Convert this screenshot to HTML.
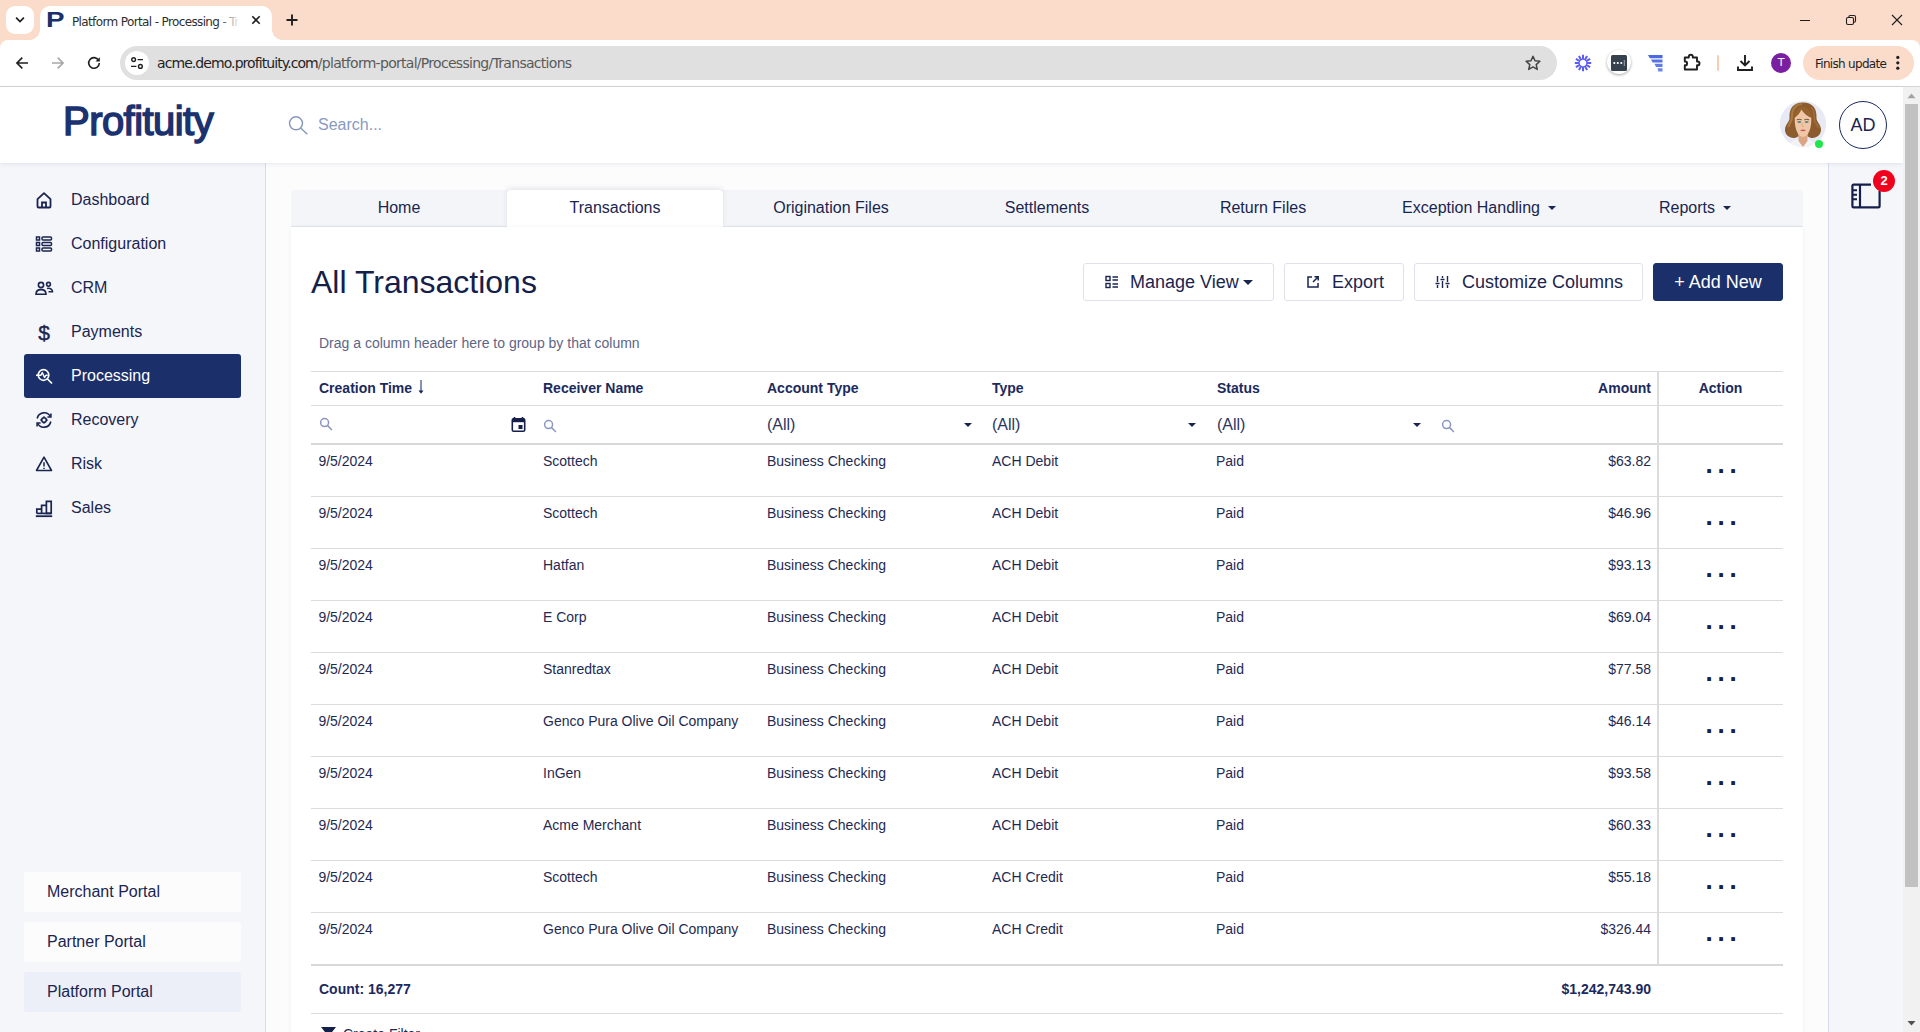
<!DOCTYPE html>
<html lang="en">
<head>
<meta charset="utf-8">
<title>Platform Portal - Processing - Transactions</title>
<style>
*{box-sizing:border-box;margin:0;padding:0}
html,body{width:1920px;height:1032px;overflow:hidden;background:#fcfcfc;font-family:"Liberation Sans",Arial,sans-serif;color:#1a2550}
.abs{position:absolute}
#root{position:relative;width:1920px;height:1032px;overflow:hidden}
/* ---------- browser chrome ---------- */
#tabstrip{left:0;top:0;width:1920px;height:50px;background:#fbdbc9}
#tabsearch{left:6px;top:6px;width:28px;height:28px;border-radius:9px;background:#fff}
#tab{left:40px;top:6px;width:232px;height:34px;background:#fff;border-radius:10px 10px 0 0}
#tab:before,#tab:after{content:"";position:absolute;bottom:0;width:10px;height:10px;background:radial-gradient(circle at 0 0,rgba(255,255,255,0) 9.5px,#fff 10px)}
#tab:before{left:-10px}
#tab:after{right:-10px;transform:scaleX(-1)}
#tabtitle{left:72px;top:13px;width:166px;height:18px;font-size:12px;line-height:18px;color:#2e2e2e;white-space:nowrap;overflow:hidden;font-family:"DejaVu Sans","Liberation Sans",sans-serif;letter-spacing:-0.63px}
#tabfade{left:218px;top:10px;width:22px;height:22px;background:linear-gradient(90deg,rgba(255,255,255,0),#fff)}
#toolbar{left:0;top:40px;width:1920px;height:46px;background:#fff;border-radius:8px 8px 0 0}
#tbline{left:0;top:86px;width:1920px;height:1px;background:#d5d5d5}
#omni{left:120px;top:46px;width:1437px;height:34px;border-radius:17px;background:#e0e0e0}
#omniicon{left:124.500px;top:50.700px;width:24.600px;height:24.600px;border-radius:13px;background:#fff}
#url{left:157px;top:53px;height:20px;font-size:14px;line-height:20px;color:#1f1f1f;white-space:nowrap;font-family:"DejaVu Sans","Liberation Sans",sans-serif;letter-spacing:-0.925px}
#url span{color:#5a5a5a;letter-spacing:-0.71px}
#finish{left:1803px;top:46px;width:111px;height:34px;border-radius:17px;background:#fbdbc9}
#finish span{position:absolute;left:12px;top:8px;font-size:12px;line-height:20px;color:#1f1f1f;font-family:"DejaVu Sans","Liberation Sans",sans-serif;letter-spacing:-0.7px;white-space:nowrap}
/* ---------- page ---------- */
#header{left:0;top:87px;width:1903px;height:76px;background:#fff;box-shadow:0 1px 4px rgba(40,50,90,.10)}
#logo{left:63px;top:96px;font-size:40px;line-height:50px;font-weight:normal;color:#1c3270;-webkit-text-stroke:1.5px #1c3270;letter-spacing:-0.55px;white-space:nowrap}
#search{left:318px;top:114px;font-size:16px;line-height:22px;color:#8a9ac0}
#avatar{left:1780px;top:101px;width:46px;height:46px;border-radius:23px;background:#e6e8f3;overflow:hidden}
#online{left:1815px;top:140px;width:8px;height:8px;border-radius:4px;background:#1fe64a}
#ad{left:1839px;top:101px;width:48px;height:48px;border-radius:24px;border:1px solid #1b2a5e;background:#fff;text-align:center;font-size:18px;line-height:47px;color:#1a2550}
#sidebar{left:0;top:163px;width:266px;height:869px;background:#f5f6fa;border-right:1px solid #d7dcf0}
.nav{left:24px;width:217px;height:44px;border-radius:3px;font-size:16px;line-height:44px;color:#1a2550;white-space:nowrap}
.nav span{position:absolute;left:47px;top:0}
.nav svg{position:absolute;left:10px;top:12px;width:20px;height:20px}
.nav.on{background:#1b306b;color:#fff}
.portal{left:24px;width:217px;height:40px;border-radius:3px;background:#fcfcfd;font-size:16px;line-height:39px;padding-left:23px;color:#1a2550;white-space:nowrap}
.portal.on{background:#edeff8}
#rpanel{left:1828px;top:163px;width:75px;height:869px;background:#f5f6fa;border-left:1px solid #d7dcf0}
#sbar{left:1903px;top:87px;width:17px;height:945px;background:#f1f1f1}
#sthumb{left:1905px;top:104px;width:13px;height:783px;background:#c1c1c1}

/* ---------- main ---------- */
#tabsbar{left:291px;top:190px;width:1512px;height:37px;background:#f3f5f9;border-bottom:1px solid #e3e6ef;border-radius:4px 4px 0 0}
.tab{top:190px;width:216px;height:36px;font-size:16px;line-height:35px;text-align:center;color:#1a2550;white-space:nowrap}
.tab.on{background:#fff;height:37px;border-radius:4px 4px 0 0;box-shadow:0 -2px 5px rgba(40,50,90,.10)}
.caret{display:inline-block;width:0;height:0;border-left:4px solid transparent;border-right:4px solid transparent;border-top:4px solid #1a2550;vertical-align:middle;margin-left:8px;position:relative;top:-1px}
#card{left:291px;top:227px;width:1512px;height:815px;background:#fff;box-shadow:0 0 4px rgba(0,0,0,.05)}
#title{left:311px;top:262px;font-size:32px;line-height:40px;color:#14204a;white-space:nowrap}
.btn{top:263px;height:38px;border:1px solid #dfe2ea;border-radius:3px;background:#fff;font-size:18px;line-height:36px;color:#1a2550;white-space:nowrap}
.btn span{position:absolute;top:0}
.btn svg{position:absolute}
.btn.pri{background:#1b306b;border-color:#1b306b;color:#fff;text-align:center}
#grouphint{left:319px;top:335px;font-size:14px;line-height:16px;color:#5d6585;white-space:nowrap}
.hl{left:311px;width:1472px;height:1px;background:#dcdcdc}
.th{top:380px;font-size:14px;line-height:16px;font-weight:bold;color:#1b2a5e;white-space:nowrap}
.flt{top:416px;font-size:16px;line-height:18px;color:#2a3560;white-space:nowrap}
.td{font-size:14px;line-height:16px;color:#1f2a52;white-space:nowrap}
.td.r,.th.r{text-align:right}
.dots{left:1705.6px;width:60px;text-align:left;font-size:26px;line-height:20px;font-weight:bold;color:#14204a;letter-spacing:4.77px;margin-top:4px}
.ddcar{width:0;height:0;border-left:4px solid transparent;border-right:4px solid transparent;border-top:4px solid #1a2550}
</style>
</head>
<body>
<div id="root">
<!-- browser chrome -->
<div id="tabstrip" class="abs"></div>
<div id="tabsearch" class="abs"></div>
<div id="tab" class="abs"></div>
<div id="tabtitle" class="abs">Platform Portal - Processing - Transactions</div>
<div id="tabfade" class="abs"></div>
<div id="toolbar" class="abs"></div>
<div id="tbline" class="abs"></div>
<div id="omni" class="abs"></div>
<div id="omniicon" class="abs"></div>
<div id="url" class="abs">acme.demo.profituity.com<span>/platform-portal/Processing/Transactions</span></div>
<div id="finish" class="abs"><span>Finish update</span></div>

<svg class="abs" style="left:12px;top:13px" width="16" height="14" viewBox="0 0 16 14"><path d="M4.100 4.600 8 8.500l3.900-3.900" fill="none" stroke="#1f1f1f" stroke-width="1.700"/></svg>
<div class="abs" style="left:46px;top:7.900px;font-size:22.400px;line-height:24px;font-weight:bold;color:#1b2f6b;font-family:'Liberation Sans',sans-serif;transform:scaleX(1.240);transform-origin:left">P</div>
<svg class="abs" style="left:248px;top:12px" width="16" height="16" viewBox="0 0 16 16"><path d="M4.300 4.300l7.400 7.400M11.700 4.300l-7.400 7.400" stroke="#1f1f1f" stroke-width="1.600"/></svg>
<svg class="abs" style="left:283px;top:11px" width="18" height="18" viewBox="0 0 18 18"><path d="M9 3.500v11M3.500 9h11" stroke="#1f1f1f" stroke-width="1.900"/></svg>
<svg class="abs" style="left:14px;top:54px" width="18" height="18" viewBox="0 0 18 18"><path d="M14 9H3.300M8.300 3.600 2.900 9l5.400 5.400" fill="none" stroke="#1f1f1f" stroke-width="1.600"/></svg>
<svg class="abs" style="left:49px;top:54px" width="18" height="18" viewBox="0 0 18 18"><path d="M3 9h10.700M8.700 3.600 14.100 9l-5.400 5.400" fill="none" stroke="#a8a8a8" stroke-width="1.600"/></svg>
<svg class="abs" style="left:84px;top:53px" width="20" height="20" viewBox="0 0 20 20"><path d="M14.600 7.300A5.300 5.300 0 1 0 15.300 10" fill="none" stroke="#1f1f1f" stroke-width="1.600"/><path d="M15.800 4.200v4.300h-4.300z" fill="#1f1f1f"/></svg>
<svg class="abs" style="left:129px;top:55px" width="16" height="16" viewBox="0 0 16 16"><g fill="none" stroke="#1f1f1f" stroke-width="1.400"><circle cx="4.600" cy="4.600" r="1.900"/><path d="M8.600 4.600h5.400M2 11.400h5.400"/><circle cx="11.400" cy="11.400" r="1.900"/></g></svg>
<svg class="abs" style="left:1524px;top:54px" width="18" height="18" viewBox="0 0 18 18"><path d="M9 2.300l2 4.500 4.900.5-3.700 3.300 1.100 4.800L9 12.900l-4.300 2.500 1.100-4.800L2.100 7.300 7 6.800z" fill="none" stroke="#444" stroke-width="1.500" stroke-linejoin="round"/></svg>
<svg class="abs" style="left:1574px;top:54px" width="18" height="18" viewBox="0 0 18 18"><g stroke="#5a5cf2" stroke-width="2"><path d="M12.20 9.00L17.20 9.00M11.77 10.60L16.10 13.10M10.60 11.77L13.10 16.10M9.00 12.20L9.00 17.20M7.40 11.77L4.90 16.10M6.23 10.60L1.90 13.10M5.80 9.00L0.80 9.00M6.23 7.40L1.90 4.90M7.40 6.23L4.90 1.90M9.00 5.80L9.00 0.80M10.60 6.23L13.10 1.90M11.77 7.40L16.10 4.90"/></g></svg>
<div class="abs" style="left:1607px;top:50px;width:24px;height:24px;border-radius:12px;background:#fff;box-shadow:0 1px 3px rgba(0,0,0,.35)"></div>
<svg class="abs" style="left:1611px;top:55px" width="16" height="16" viewBox="0 0 16 16"><rect width="16" height="16" rx="1.500" fill="#35414d"/><circle cx="3.300" cy="8" r="1.100" fill="#fff"/><circle cx="6.800" cy="8" r="1.100" fill="#fff"/><circle cx="10.300" cy="8" r="1.100" fill="#fff"/><path d="M13.300 5v6" stroke="#9aa3ad" stroke-width="1"/></svg>
<svg class="abs" style="left:1647px;top:54px" width="16" height="18" viewBox="0 0 16 18"><path d="M1 1h14.500v3.200H2.800z" fill="#4a68e0"/><path d="M4 5.400h11.500v3.200H5.600z" fill="#5572e4"/><path d="M7.500 9.800h8v3.200H9z" fill="#5f7ce8"/><path d="M10.500 14.200h5v3.200h-4.200z" fill="#6a86ec"/></svg>
<svg class="abs" style="left:1682px;top:52px" width="20" height="20" viewBox="0 0 20 20"><path d="M2.800 5.500H6.800V4.700a2 2 0 0 1 4 0v.8H15v4h.6a1.900 1.900 0 0 1 0 3.800H15v4.200H2.800v-4.200h.4a1.900 1.900 0 0 0 0-3.800h-.4z" fill="none" stroke="#1f1f1f" stroke-width="1.900" stroke-linejoin="round"/></svg>
<div class="abs" style="left:1717px;top:55px;width:2px;height:16px;border-radius:1px;background:#f8cdb8"></div>
<svg class="abs" style="left:1736px;top:53px" width="18" height="20" viewBox="0 0 18 20"><path d="M9 2v10M4.500 8 9 12.500 13.500 8" fill="none" stroke="#1f1f1f" stroke-width="1.900"/><path d="M2 13.500V17h14v-3.500" fill="none" stroke="#1f1f1f" stroke-width="1.900"/></svg>
<div class="abs" style="left:1771px;top:53px;width:20px;height:20px;border-radius:10px;background:#7b1fa2;color:#fff;font-size:11px;line-height:20px;text-align:center;font-family:'DejaVu Sans',sans-serif">T</div>
<svg class="abs" style="left:1895px;top:54px" width="6" height="18" viewBox="0 0 6 18"><circle cx="2.800" cy="3.400" r="1.600" fill="#1f1f1f"/><circle cx="2.800" cy="8.800" r="1.600" fill="#1f1f1f"/><circle cx="2.800" cy="14.200" r="1.600" fill="#1f1f1f"/></svg>
<svg class="abs" style="left:1799px;top:14px" width="12" height="12" viewBox="0 0 12 12"><path d="M1 6.500h10" stroke="#1f1f1f" stroke-width="1"/></svg>
<svg class="abs" style="left:1845px;top:14px" width="12" height="12" viewBox="0 0 12 12"><g fill="none" stroke="#1f1f1f" stroke-width="1.100"><rect x="1.500" y="3.500" width="7" height="7" rx="1.500"/><path d="M3.800 3.300V3A1.500 1.500 0 0 1 5.300 1.500H9A1.500 1.500 0 0 1 10.500 3v3.700a1.500 1.500 0 0 1-1.500 1.500h-.3"/></g></svg>
<svg class="abs" style="left:1891px;top:14px" width="12" height="12" viewBox="0 0 12 12"><path d="M1 1l10 10M11 1 1 11" stroke="#1f1f1f" stroke-width="1.100"/></svg>

<!-- page -->
<div id="sidebar" class="abs"></div>
<div id="rpanel" class="abs"></div>
<div id="tabsbar" class="abs"></div>
<div class="tab abs" style="left:291px">Home</div>
<div class="tab abs on" style="left:507px">Transactions</div>
<div class="tab abs" style="left:723px">Origination Files</div>
<div class="tab abs" style="left:939px">Settlements</div>
<div class="tab abs" style="left:1155px">Return Files</div>
<div class="tab abs" style="left:1371px">Exception Handling<i class="caret"></i></div>
<div class="tab abs" style="left:1587px">Reports<i class="caret"></i></div>
<div id="card" class="abs"></div>
<div id="title" class="abs">All Transactions</div>
<div class="btn abs" style="left:1083px;width:191px"><svg style="left:20px;top:10px" width="16" height="16" viewBox="0 0 16 16"><g fill="none" stroke="#1a2550" stroke-width="1.4"><rect x="2" y="2.500" width="4" height="4"/><rect x="2" y="9.500" width="4" height="4"/><path d="M8.500 3h5.500M8.500 6h5.500M8.500 10h5.500M8.500 13h5.500"/></g></svg><span style="left:46px">Manage View</span><i class="ddcar abs" style="left:159px;top:16px;border-left-width:5px;border-right-width:5px;border-top-width:5px"></i></div>
<div class="btn abs" style="left:1284px;width:120px"><svg style="left:20px;top:10px" width="16" height="16" viewBox="0 0 16 16"><g fill="none" stroke="#1a2550" stroke-width="1.500"><path d="M7 3H3v10h10V9"/><path d="M9.500 2.800H13.200V6.500M13 3 8 8"/></g></svg><span style="left:47px">Export</span></div>
<div class="btn abs" style="left:1414px;width:229px"><svg style="left:19px;top:10px" width="17" height="16" viewBox="0 0 17 16"><g fill="none" stroke="#1a2550" stroke-width="1.400"><path d="M3.500 2v6M3.500 11v3M1.500 9.500h4M8.500 2v2M8.500 7v7M6.500 5.500h4M13.500 2v6M13.500 11v3M11.500 9.500h4"/></g></svg><span style="left:47px">Customize Columns</span></div>
<div class="btn pri abs" style="left:1653px;width:130px">+ Add New</div>
<div id="grouphint" class="abs">Drag a column header here to group by that column</div>
<div class="hl abs" style="top:371px"></div>
<div class="hl abs" style="top:405px"></div>
<div class="hl abs" style="top:443px;height:2px;background:#d8d8d8"></div>
<div class="th abs" style="left:319px">Creation Time</div>
<div class="th abs" style="left:543px">Receiver Name</div>
<div class="th abs" style="left:767px">Account Type</div>
<div class="th abs" style="left:992px">Type</div>
<div class="th abs" style="left:1217px">Status</div>
<div class="th r abs" style="left:1451px;width:200px">Amount</div>
<div class="th abs" style="left:1658px;width:125px;text-align:center">Action</div>
<svg class="abs" style="left:319px;top:417px" width="14" height="14" viewBox="0 0 13 13"><g fill="none" stroke="#8b97c2" stroke-width="1.400"><circle cx="5.200" cy="5.200" r="3.700"/><path d="M8 8l4 4"/></g></svg>
<svg class="abs" style="left:543px;top:419px" width="14" height="14" viewBox="0 0 13 13"><g fill="none" stroke="#8b97c2" stroke-width="1.400"><circle cx="5.200" cy="5.200" r="3.700"/><path d="M8 8l4 4"/></g></svg>
<svg class="abs" style="left:1441px;top:419px" width="14" height="14" viewBox="0 0 13 13"><g fill="none" stroke="#8b97c2" stroke-width="1.400"><circle cx="5.200" cy="5.200" r="3.700"/><path d="M8 8l4 4"/></g></svg>
<svg class="abs" style="left:511px;top:416px" width="15" height="17" viewBox="0 0 15 17"><path d="M3.500 1v2.500M11.500 1v2.500" stroke="#14204a" stroke-width="1.600"/><rect x="1.300" y="2.800" width="12.400" height="12.400" rx="1.300" fill="none" stroke="#14204a" stroke-width="1.600"/><rect x="1.300" y="2.800" width="12.400" height="3.400" fill="#14204a"/><rect x="7.500" y="9" width="4" height="4" fill="#14204a"/></svg>
<div class="flt abs" style="left:767px">(All)</div>
<div class="flt abs" style="left:992px">(All)</div>
<div class="flt abs" style="left:1217px">(All)</div>
<i class="ddcar abs" style="left:964px;top:423px"></i>
<i class="ddcar abs" style="left:1188px;top:423px"></i>
<i class="ddcar abs" style="left:1413px;top:423px"></i>
<div class="td abs" style="left:318.400px;top:453px">9/5/2024</div><div class="td abs" style="left:543px;top:453px">Scottech</div><div class="td abs" style="left:767px;top:453px">Business Checking</div><div class="td abs" style="left:992px;top:453px">ACH Debit</div><div class="td abs" style="left:1216px;top:453px">Paid</div><div class="td r abs" style="left:1451px;width:200px;top:453px">$63.82</div><div class="dots abs" style="top:450px">...</div>
<div class="hl abs" style="top:496px"></div>
<div class="td abs" style="left:318.400px;top:505px">9/5/2024</div><div class="td abs" style="left:543px;top:505px">Scottech</div><div class="td abs" style="left:767px;top:505px">Business Checking</div><div class="td abs" style="left:992px;top:505px">ACH Debit</div><div class="td abs" style="left:1216px;top:505px">Paid</div><div class="td r abs" style="left:1451px;width:200px;top:505px">$46.96</div><div class="dots abs" style="top:502px">...</div>
<div class="hl abs" style="top:548px"></div>
<div class="td abs" style="left:318.400px;top:557px">9/5/2024</div><div class="td abs" style="left:543px;top:557px">Hatfan</div><div class="td abs" style="left:767px;top:557px">Business Checking</div><div class="td abs" style="left:992px;top:557px">ACH Debit</div><div class="td abs" style="left:1216px;top:557px">Paid</div><div class="td r abs" style="left:1451px;width:200px;top:557px">$93.13</div><div class="dots abs" style="top:554px">...</div>
<div class="hl abs" style="top:600px"></div>
<div class="td abs" style="left:318.400px;top:609px">9/5/2024</div><div class="td abs" style="left:543px;top:609px">E Corp</div><div class="td abs" style="left:767px;top:609px">Business Checking</div><div class="td abs" style="left:992px;top:609px">ACH Debit</div><div class="td abs" style="left:1216px;top:609px">Paid</div><div class="td r abs" style="left:1451px;width:200px;top:609px">$69.04</div><div class="dots abs" style="top:606px">...</div>
<div class="hl abs" style="top:652px"></div>
<div class="td abs" style="left:318.400px;top:661px">9/5/2024</div><div class="td abs" style="left:543px;top:661px">Stanredtax</div><div class="td abs" style="left:767px;top:661px">Business Checking</div><div class="td abs" style="left:992px;top:661px">ACH Debit</div><div class="td abs" style="left:1216px;top:661px">Paid</div><div class="td r abs" style="left:1451px;width:200px;top:661px">$77.58</div><div class="dots abs" style="top:658px">...</div>
<div class="hl abs" style="top:704px"></div>
<div class="td abs" style="left:318.400px;top:713px">9/5/2024</div><div class="td abs" style="left:543px;top:713px">Genco Pura Olive Oil Company</div><div class="td abs" style="left:767px;top:713px">Business Checking</div><div class="td abs" style="left:992px;top:713px">ACH Debit</div><div class="td abs" style="left:1216px;top:713px">Paid</div><div class="td r abs" style="left:1451px;width:200px;top:713px">$46.14</div><div class="dots abs" style="top:710px">...</div>
<div class="hl abs" style="top:756px"></div>
<div class="td abs" style="left:318.400px;top:765px">9/5/2024</div><div class="td abs" style="left:543px;top:765px">InGen</div><div class="td abs" style="left:767px;top:765px">Business Checking</div><div class="td abs" style="left:992px;top:765px">ACH Debit</div><div class="td abs" style="left:1216px;top:765px">Paid</div><div class="td r abs" style="left:1451px;width:200px;top:765px">$93.58</div><div class="dots abs" style="top:762px">...</div>
<div class="hl abs" style="top:808px"></div>
<div class="td abs" style="left:318.400px;top:817px">9/5/2024</div><div class="td abs" style="left:543px;top:817px">Acme Merchant</div><div class="td abs" style="left:767px;top:817px">Business Checking</div><div class="td abs" style="left:992px;top:817px">ACH Debit</div><div class="td abs" style="left:1216px;top:817px">Paid</div><div class="td r abs" style="left:1451px;width:200px;top:817px">$60.33</div><div class="dots abs" style="top:814px">...</div>
<div class="hl abs" style="top:860px"></div>
<div class="td abs" style="left:318.400px;top:869px">9/5/2024</div><div class="td abs" style="left:543px;top:869px">Scottech</div><div class="td abs" style="left:767px;top:869px">Business Checking</div><div class="td abs" style="left:992px;top:869px">ACH Credit</div><div class="td abs" style="left:1216px;top:869px">Paid</div><div class="td r abs" style="left:1451px;width:200px;top:869px">$55.18</div><div class="dots abs" style="top:866px">...</div>
<div class="hl abs" style="top:912px"></div>
<div class="td abs" style="left:318.400px;top:921px">9/5/2024</div><div class="td abs" style="left:543px;top:921px">Genco Pura Olive Oil Company</div><div class="td abs" style="left:767px;top:921px">Business Checking</div><div class="td abs" style="left:992px;top:921px">ACH Credit</div><div class="td abs" style="left:1216px;top:921px">Paid</div><div class="td r abs" style="left:1451px;width:200px;top:921px">$326.44</div><div class="dots abs" style="top:918px">...</div>
<div class="hl abs" style="top:964px;height:2px;background:#d8d8d8"></div>
<div class="abs" style="left:1657px;top:372px;width:2px;height:592px;background:#dcdcdc"></div>
<div class="th abs" style="left:319px;top:981px">Count: 16,277</div>
<div class="th r abs" style="left:1451px;width:200px;top:981px">$1,242,743.90</div>
<div class="hl abs" style="top:1013px"></div>
<svg class="abs" style="left:321px;top:1027px" width="15" height="10" viewBox="0 0 15 10"><path d="M0 0h15L9.500 7h-4z" fill="#14204a"/></svg>
<div class="td abs" style="left:343px;top:1025.500px;font-size:14px">Create Filter</div>
<svg class="abs" style="left:417px;top:379px" width="8" height="16" viewBox="0 0 8 16"><path d="M4 1v12" stroke="#14235a" stroke-width="1"/><path d="M1.500 11.500h5L4 14.800z" fill="#14235a"/></svg>
<!--MAIN2-->
<div id="header" class="abs"></div>
<div id="logo" class="abs">Profituity</div>
<div id="search" class="abs">Search...</div>
<div id="avatar" class="abs"><svg width="46" height="46" viewBox="0 0 46 46"><rect width="46" height="46" fill="#e7e9f4"/><path d="M7 46c1-4 5-6.500 10-7.500h11c4 1 7 3.500 8 7.500z" fill="#f3f3f6"/><path d="M18.500 30h9v10l-4.500 6-4.500-6z" fill="#dba683"/><path d="M23 1.500C12.500 1.500 9 8.500 9.500 17c.2 3.500-4 6-4.500 11-.5 5.500 4.500 9.500 9.500 9 2.500-.3 4-2 4-2L17 17l6-6 6 6-1.500 18s1.500 1.700 4 2c5 .5 10-3.500 9.500-9-.5-5-4.700-7.500-4.500-11C37 8.500 33.500 1.500 23 1.500z" fill="#8c5c2e"/><path d="M22 3c-7 .5-10.500 6-10 13 .3 4-3 6-3.500 10" fill="none" stroke="#aa7940" stroke-width="2.200"/><path d="M31 6c4 4 3 10 3.500 13 .5 3 3.500 5 4 8" fill="none" stroke="#a06d38" stroke-width="1.600"/><path d="M14.700 19c0-7 3-11.500 8.300-11.500S31.300 12 31.300 19c0 8-3 17-8.300 17s-8.300-9-8.300-17z" fill="#efc6a6"/><path d="M14.300 17c2.500-1.500 6-5 7-8.500 2 3.500 6 7 10.400 8.500C31.500 10 28.500 6 23 6s-8.500 4-8.700 11z" fill="#96632f"/><ellipse cx="19.300" cy="21" rx="2" ry="1" fill="#5d8388"/><ellipse cx="26.700" cy="21" rx="2" ry="1" fill="#5d8388"/><path d="M16.800 18.800q2.500-1 4.800 0M24.400 18.800q2.300-1 4.800 0" stroke="#6b4524" stroke-width=".9" fill="none"/><path d="M22.300 22v3.500h1.400" stroke="#d9a685" stroke-width=".8" fill="none"/><path d="M20 29.300q3 2 6 0-3-1.700-6 0z" fill="#c7545e"/></svg></div>
<div id="online" class="abs"></div>
<div id="ad" class="abs">AD</div>
<div class="nav abs" style="top:178px"><svg viewBox="0 0 20 20"><path d="M3.5 9.2 10 3.2l6.5 6v7.3a1 1 0 0 1-1 1h-11a1 1 0 0 1-1-1z" fill="none" stroke="currentColor" stroke-width="1.8" stroke-linejoin="round"/><path d="M8 17v-4.5h4V17" fill="none" stroke="currentColor" stroke-width="1.8"/></svg><span>Dashboard</span></div>
<div class="nav abs" style="top:222px"><svg viewBox="0 0 20 20"><g fill="none" stroke="currentColor" stroke-width="1.5"><rect x="2.5" y="3" width="3" height="3"/><rect x="8" y="3" width="9.5" height="3" rx="1"/><rect x="2.5" y="8.5" width="3" height="3"/><rect x="8" y="8.5" width="9.5" height="3" rx="1"/><rect x="2.5" y="14" width="3" height="3"/><rect x="8" y="14" width="9.5" height="3" rx="1"/></g></svg><span>Configuration</span></div>
<div class="nav abs" style="top:266px"><svg viewBox="0 0 20 20"><g fill="none" stroke="currentColor" stroke-width="1.6"><circle cx="7" cy="7" r="2.6"/><path d="M2 16.2c0-3 2.2-4.6 5-4.6s5 1.600 5 4.600z"/><circle cx="14.500" cy="6.300" r="1.900"/><path d="M13 10.500c3-.8 5.500.8 5.500 3.300h-4"/></g></svg><span>CRM</span></div>
<div class="nav abs" style="top:310px"><svg viewBox="0 0 20 20"><text x="10" y="17.500" text-anchor="middle" font-size="21" font-family="Liberation Sans,sans-serif" fill="currentColor" stroke="currentColor" stroke-width=".4">$</text></svg><span>Payments</span></div>
<div class="nav abs on" style="top:354px"><svg viewBox="0 0 20 20"><g fill="none" stroke="currentColor" stroke-width="1.7"><circle cx="9.5" cy="9" r="5.3"/><path d="M13.500 13 18 17.500"/><path d="M2 9.300h4.800l1.500-2.800 2.200 5 1.400-2.200h1.800" stroke-width="1.4" stroke-linejoin="round"/></g></svg><span>Processing</span></div>
<div class="nav abs" style="top:398px"><svg viewBox="0 0 20 20"><g fill="none" stroke="currentColor" stroke-width="1.6"><path d="M3.200 8.500A7 7 0 0 1 16.500 7"/><path d="M16.800 11.500A7 7 0 0 1 3.500 13"/><path d="M16.900 3.500V7h-3.500"/><path d="M3.100 16.500V13h3.500"/><circle cx="10" cy="10" r="2.300"/><path d="M10 6.300v1.400M10 12.300v1.400M6.300 10h1.400M12.300 10h1.400" stroke-width="1.400"/></g></svg><span>Recovery</span></div>
<div class="nav abs" style="top:442px"><svg viewBox="0 0 20 20"><g fill="none" stroke="currentColor" stroke-width="1.6" stroke-linejoin="round"><path d="M10 3.200 17.500 16.500h-15z"/><path d="M10 8.200v4.300M10 13.800v1.300" stroke-width="1.500"/></g></svg><span>Risk</span></div>
<div class="nav abs" style="top:486px"><svg viewBox="0 0 20 20"><g fill="none" stroke="currentColor" stroke-width="1.7"><path d="M1.800 18.200h16.400" stroke-width="1.800"/><path d="M2.800 15.400v-4.200h4.800v4.200M7.600 15.400V7.400h4.800v8M12.400 15.400V3.400h4.800v12z" stroke-linejoin="miter"/><path d="M2.800 15.400h14.400"/></g></svg><span>Sales</span></div>
<div class="portal abs" style="top:872px">Merchant Portal</div>
<div class="portal abs" style="top:922px">Partner Portal</div>
<div class="portal abs on" style="top:972px">Platform Portal</div>

<svg class="abs" style="left:288px;top:115px" width="21" height="21" viewBox="0 0 21 21"><g fill="none" stroke="#8696bd" stroke-width="1.400"><circle cx="8" cy="8.300" r="6.500"/><path d="M12.700 13 19.300 19.300"/></g></svg>
<svg class="abs" style="left:1850px;top:182px" width="32" height="28" viewBox="0 0 32 28"><g fill="none" stroke="#14204a" stroke-width="2.200" stroke-linejoin="round"><path d="M21 2.600H3.600a1.200 1.200 0 0 0-1.200 1.200v20.400a1.200 1.200 0 0 0 1.200 1.200h24.800a1.200 1.200 0 0 0 1.200-1.200V9"/><path d="M10 2.600v22.800"/><path d="M2.400 8.200h4.600M2.400 12.700h4.600M2.400 17.200h4.600" stroke-width="2"/></g></svg>
<div class="abs" style="left:1873px;top:170px;width:22px;height:22px;border-radius:11px;background:#f0001c;color:#fff;font-size:13px;font-weight:bold;line-height:22px;text-align:center">2</div>
<!--NAV2-->
<div id="sbar" class="abs"></div>
<div id="sthumb" class="abs"></div>
<svg class="abs" style="left:1906px;top:92px" width="11" height="8" viewBox="0 0 11 8"><path d="M5.500 1.500 9.500 6.200H1.500z" fill="#a3a3a3"/></svg>
<svg class="abs" style="left:1906px;top:1020px" width="11" height="8" viewBox="0 0 11 8"><path d="M5.500 5.500 9.500 1H1.500z" fill="#505050"/></svg>

</div>
</body>
</html>
